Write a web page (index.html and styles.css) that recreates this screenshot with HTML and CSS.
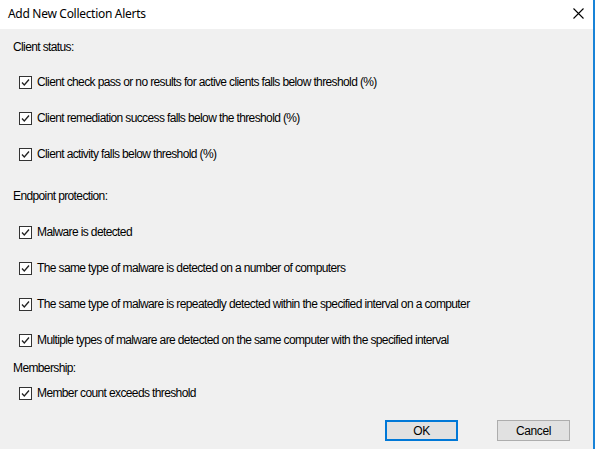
FILE: index.html
```html
<!DOCTYPE html>
<html>
<head>
<meta charset="utf-8">
<link rel="stylesheet" href="styles.css">
</head>
<body>
<div class="window">
  <div class="titlebar">
    <span class="title">Add New Collection Alerts</span>
    <svg class="close" width="11" height="11" viewBox="0 0 11 11"><path d="M0.5 0.5 L10.5 10.5 M10.5 0.5 L0.5 10.5" stroke="#000" stroke-width="1.1" fill="none"/></svg>
  </div>
  <div class="content">
    <div class="label first">Client status:</div>
    <div class="row"><span class="cb"><svg width="11" height="11" viewBox="0 0 11 11"><path d="M2 5.5 L4.3 8 L9 2.5" stroke="#222" stroke-width="1.3" fill="none"/></svg></span><span>Client check pass or no results for active clients falls below threshold (%)</span></div>
    <div class="row"><span class="cb"><svg width="11" height="11" viewBox="0 0 11 11"><path d="M2 5.5 L4.3 8 L9 2.5" stroke="#222" stroke-width="1.3" fill="none"/></svg></span><span>Client remediation success falls below the threshold (%)</span></div>
    <div class="row"><span class="cb"><svg width="11" height="11" viewBox="0 0 11 11"><path d="M2 5.5 L4.3 8 L9 2.5" stroke="#222" stroke-width="1.3" fill="none"/></svg></span><span>Client activity falls below threshold (%)</span></div>
    <div class="label second">Endpoint protection:</div>
    <div class="row"><span class="cb"><svg width="11" height="11" viewBox="0 0 11 11"><path d="M2 5.5 L4.3 8 L9 2.5" stroke="#222" stroke-width="1.3" fill="none"/></svg></span><span>Malware is detected</span></div>
    <div class="row"><span class="cb"><svg width="11" height="11" viewBox="0 0 11 11"><path d="M2 5.5 L4.3 8 L9 2.5" stroke="#222" stroke-width="1.3" fill="none"/></svg></span><span>The same type of malware is detected on a number of computers</span></div>
    <div class="row"><span class="cb"><svg width="11" height="11" viewBox="0 0 11 11"><path d="M2 5.5 L4.3 8 L9 2.5" stroke="#222" stroke-width="1.3" fill="none"/></svg></span><span>The same type of malware is repeatedly detected within the specified interval on a computer</span></div>
    <div class="row"><span class="cb"><svg width="11" height="11" viewBox="0 0 11 11"><path d="M2 5.5 L4.3 8 L9 2.5" stroke="#222" stroke-width="1.3" fill="none"/></svg></span><span>Multiple types of malware are detected on the same computer with the specified interval</span></div>
    <div class="label third">Membership:</div>
    <div class="row short"><span class="cb"><svg width="11" height="11" viewBox="0 0 11 11"><path d="M2 5.5 L4.3 8 L9 2.5" stroke="#222" stroke-width="1.3" fill="none"/></svg></span><span>Member count exceeds threshold</span></div>
    <div class="buttons">
      <button class="btn default">OK</button>
      <button class="btn">Cancel</button>
    </div>
  </div>
</div>
</body>
</html>
```
FILE: styles.css
```css
html, body {
  margin: 0;
  padding: 0;
}
body {
  width: 595px;
  height: 449px;
  overflow: hidden;
  font-family: "Liberation Sans", Arial, sans-serif;
  font-size: 12px;
  letter-spacing: -0.62px;
  color: #000;
}
.window {
  width: 593px;
  height: 449px;
  border-right: 2px solid #1883d7;
  display: flex;
  flex-direction: column;
}
.titlebar {
  height: 29px;
  background: #fff;
  display: flex;
  align-items: center;
  justify-content: space-between;
  padding: 0 9px 0 8px;
  box-sizing: border-box;
}
.title {
  font-family: "Noto Sans", sans-serif;
  font-size: 12px;
  letter-spacing: -0.3px;
  position: relative;
  top: -1px;
}
.close {
  position: relative;
  top: -1px;
}
.content {
  flex: 1;
  background: #f0f0f0;
  display: flex;
  flex-direction: column;
  padding-left: 13px;
}
.label {
  height: 20px;
  line-height: 20px;
}
.label.first { margin-top: 8px; margin-bottom: 7px; }
.label.second { margin-top: 14px; margin-bottom: 8px; }
.row {
  height: 36px;
  display: flex;
  align-items: center;
  padding-left: 6px;
}
.row.short { height: 30px; }
.cb {
  width: 13px;
  height: 13px;
  box-sizing: border-box;
  border: 1px solid #333;
  background: #fff;
  display: flex;
  align-items: center;
  justify-content: center;
  margin-right: 5px;
}
.cb svg { display: block; }
.buttons {
  display: flex;
  margin-top: 12px;
  padding-left: 372px;
  gap: 39px;
}
.btn {
  width: 73px;
  height: 21px;
  box-sizing: border-box;
  border: 1px solid #adadad;
  background: #e1e1e1;
  font-family: "Liberation Sans", Arial, sans-serif;
  font-size: 12px;
  letter-spacing: -0.4px;
  color: #000;
  padding: 0;
}
.btn.default {
  border: 2px solid #0078d7;
}
```
